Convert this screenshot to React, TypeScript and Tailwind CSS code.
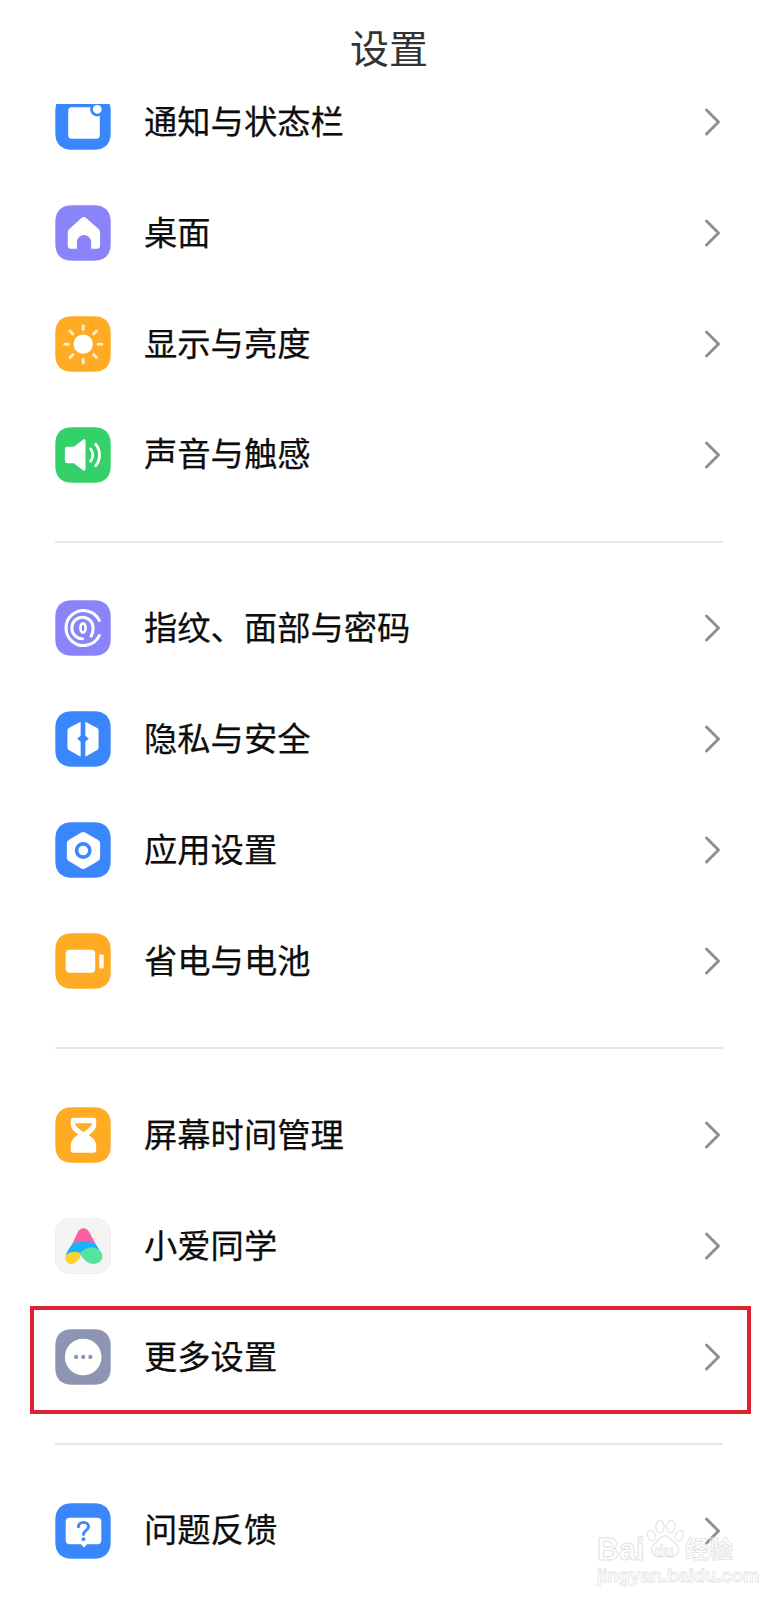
import React from "react";

const Squircle = ({ fill, stroke }: { fill: string; stroke?: string }) => (
  <path
    d="M17 .3H38C49 .3 54.700 6 54.700 17V38C54.700 49 49 54.700 38 54.700H17C6 54.700 .3 49 .3 38V17C.3 6 6 .3 17 .3Z"
    fill={fill}
    stroke={stroke}
    strokeWidth={stroke ? 0.8 : 0}
  />
);

const Svg = ({ children }: { children: React.ReactNode }) => (
  <svg width="56" height="56" viewBox="0 0 55 55" className="shrink-0 block">
    {children}
  </svg>
);

const BLUE = "#3a86fd";
const PURPLE = "#8a84fa";
const ORANGE = "#ffab24";

const icons: Record<string, React.ReactNode> = {
  bell: (
    <Svg>
      <Squircle fill={BLUE} />
      <rect x="13" y="13" width="31" height="31" rx="3.500" fill="#fff" />
      <circle cx="41.500" cy="15" r="7" fill={BLUE} />
      <circle cx="41.500" cy="15" r="4.300" fill="#fff" />
    </Svg>
  ),
  home: (
    <Svg>
      <Squircle fill={PURPLE} />
      <path
        d="M25.500 12.800a3.600 3.600 0 0 1 4.600 0l12.400 11a4 4 0 0 1 1.300 3V40a3 3 0 0 1-3 3H35V36.500a7 7 0 0 0-14 0V43h-6a3 3 0 0 1-3-3V26.800a4 4 0 0 1 1.300-3Z"
        fill="#fff"
        transform="translate(.5 0)"
      />
    </Svg>
  ),
  sun: (
    <Svg>
      <Squircle fill={ORANGE} />
      <circle cx="27.700" cy="27.700" r="9.500" fill="#fff" />
      <g stroke="#ffe9c4" strokeWidth="3" strokeLinecap="round">
        <path d="M27.700 9.500v3.800M27.700 42.200v3.800M9.500 27.700h3.800M42.200 27.700h3.800M14.800 14.800l2.700 2.700M38 38l2.700 2.700M14.800 40.700l2.700-2.700M38 17.500l2.700-2.700" />
      </g>
    </Svg>
  ),
  sound: (
    <Svg>
      <Squircle fill="#34d068" />
      <path
        d="M12 19.500h6.500L27.500 12.500c1.300-1 2.500-.4 2.500 1.200v27.600c0 1.600-1.200 2.200-2.500 1.200L18.500 35.500H12a2.300 2.300 0 0 1-2.300-2.300V21.800A2.300 2.300 0 0 1 12 19.500Z"
        fill="#fff"
      />
      <path d="M35 21.500c2.800 3.500 2.800 8.500 0 12M40 17c5 6 5 15 0 21" fill="none" stroke="#fff" strokeWidth="2.800" strokeLinecap="round" />
    </Svg>
  ),
  finger: (
    <Svg>
      <Squircle fill={PURPLE} />
      <g fill="none" stroke="#fff" strokeLinecap="round">
        <path d="M43.500 20A17.200 17.200 0 1 0 43.500 35" strokeWidth="3" />
        <path d="M27 38a10.500 10.500 0 1 1 10.500-10.500c0 3-.5 5.500-2 8" strokeWidth="3" />
        <ellipse cx="27.500" cy="27.500" rx="2.500" ry="4.500" strokeWidth="2.600" />
      </g>
    </Svg>
  ),
  shield: (
    <Svg>
      <Squircle fill={BLUE} />
      <path d="M25.200 10.500v13.500l-3 3.300 3 3v14.700L14 38.500a3 3 0 0 1-1.800-2.700V19.300A3 3 0 0 1 14 16.500Z" fill="#fff" />
      <path d="M29.800 10.500v13.500l3 3.300-3 3v14.700L41 38.500a3 3 0 0 0 1.800-2.700V19.300A3 3 0 0 0 41 16.500Z" fill="#fff" />
      <path d="M27.500 20.800l2 4.500 4 2-4 2-2 4.500-2-4.500-4-2 4-2Z" fill={BLUE} />
    </Svg>
  ),
  nut: (
    <Svg>
      <Squircle fill={BLUE} />
      <path d="M25.800 10.300a3.800 3.800 0 0 1 3.800 0l12.800 7.300a3.800 3.800 0 0 1 1.900 3.300v14a3.800 3.800 0 0 1-1.900 3.300l-12.800 7.400a3.800 3.800 0 0 1-3.800 0l-12.300-7.400a3.800 3.800 0 0 1-1.900-3.300v-14a3.800 3.800 0 0 1 1.900-3.300Z" fill="#fff" />
      <circle cx="27.700" cy="28" r="6.500" fill="#fff" stroke={BLUE} strokeWidth="3.500" />
    </Svg>
  ),
  battery: (
    <Svg>
      <Squircle fill={ORANGE} />
      <rect x="10.500" y="16.500" width="29" height="22.500" rx="4" fill="#fff" />
      <rect x="43.500" y="21" width="4.300" height="13.800" rx="1" fill="#fff" />
    </Svg>
  ),
  hourglass: (
    <Svg>
      <Squircle fill={ORANGE} />
      <path d="M18 10.500h20a2.500 2.500 0 0 1 2.500 2.500v4c0 4-2.500 7.500-7.500 10.500 5 3 7.500 6.500 7.500 10.500v5A2.500 2.500 0 0 1 38 45H18a2.500 2.500 0 0 1-2.500-2.500v-5c0-4 2.500-7.500 7.500-10.500-5-3-7.500-6.500-7.500-10.500v-4A2.500 2.500 0 0 1 18 10.500Z" fill="#fff" />
      <path d="M19.500 16h17c-.8 3-3.500 5.500-8.500 8.500-5-3-7.700-5.500-8.500-8.500Z" fill={ORANGE} />
    </Svg>
  ),
  ai: (
    <Svg>
      <Squircle fill="#f4f4f5" stroke="#e9e9ea" />
      <path d="M28 10c2.700 0 4.500 1.600 5.800 4.200L43.500 32H14l8.200-17.800C23.500 11.600 25.300 10 28 10Z" fill="#fb5f9f" />
      <path d="M10.500 37c1-4 3.500-8 6.500-11 3-2.300 7-3.500 11.500-3.500 4.500 0 8.500 1.300 11.500 3.500l3.500 5-17 6-6-3-10 3Z" fill="#19b2ff" />
      <path d="M10 40.500c-.5-3 1.500-5.500 5-6.700 4-1.300 8-.8 10.500 1.700-.5 4-3.500 8-8.500 9.500-3.500 1-6-1.500-7-4.500Z" fill="#fed22d" />
      <path d="M24.500 34.500c3-3.500 7.500-6 12.500-5.500 5.500.5 9.500 4 9.500 8.500 0 4.500-4 7.500-8.500 7.500-5.500 0-10-4-13.500-10.500Z" fill="#55e3a0" />
    </Svg>
  ),
  more: (
    <Svg>
      <Squircle fill="#8e95b2" />
      <circle cx="27.700" cy="27.500" r="18" fill="#fff" />
      <circle cx="20.700" cy="27.500" r="2.100" fill="#8e95b2" />
      <circle cx="27.700" cy="27.500" r="2.100" fill="#8e95b2" />
      <circle cx="34.700" cy="27.500" r="2.100" fill="#8e95b2" />
    </Svg>
  ),
  help: (
    <Svg>
      <Squircle fill={BLUE} />
      <path d="M14.500 14.500h27a4 4 0 0 1 4 4V36.500a4 4 0 0 1-4 4H31.500l-3 3.200-3-3.200H14.500a4 4 0 0 1-4-4V18.500a4 4 0 0 1 4-4Z" fill="#fff" />
      <path d="M23 23.500c0-2.800 2.200-4.500 5-4.500s5 1.700 5 4.300c0 3.700-5 3.700-5 7.700" fill="none" stroke={BLUE} strokeWidth="2.800" strokeLinecap="round" />
      <circle cx="28" cy="35.500" r="1.900" fill={BLUE} />
    </Svg>
  ),
};

const Row = ({ icon, label }: { icon: string; label: string }) => (
  <div className="flex items-center h-[110.875px] pl-[55px] pr-[57px]">
    {icons[icon]}
    <span className="ml-[33px] mb-[5px] flex-1 text-[33.300px] leading-none text-[#0d0d0d] [-webkit-text-stroke:.25px_#0d0d0d]">{label}</span>
    <svg width="18" height="28" viewBox="0 0 18 28" className="shrink-0 block">
      <path d="M3.500 2l12 12-12 12" fill="none" stroke="#8f8f8f" strokeWidth="2.900" strokeLinecap="round" strokeLinejoin="round" />
    </svg>
  </div>
);

const Divider = () => (
  <div className="px-[55px] h-[63px] flex items-center">
    <div className="h-[2px] w-full bg-[#e6e6e6]" />
  </div>
);

export default function App() {
  return (
    <div className="relative h-[1600px] w-[778px] overflow-hidden bg-white font-['Noto_Sans_CJK_SC','Noto_Sans',sans-serif]">
      <header className="relative z-10 h-[104px] bg-white pt-[27px] text-center text-[39px] leading-[39px] text-[#333333]">
        设置
      </header>
      <main className="-mt-[37.500px]">
        <Row icon="bell" label="通知与状态栏" />
        <Row icon="home" label="桌面" />
        <Row icon="sun" label="显示与亮度" />
        <Row icon="sound" label="声音与触感" />
        <Divider />
        <Row icon="finger" label="指纹、面部与密码" />
        <Row icon="shield" label="隐私与安全" />
        <Row icon="nut" label="应用设置" />
        <Row icon="battery" label="省电与电池" />
        <Divider />
        <Row icon="hourglass" label="屏幕时间管理" />
        <Row icon="ai" label="小爱同学" />
        <Row icon="more" label="更多设置" />
        <Divider />
        <Row icon="help" label="问题反馈" />
      </main>

      {/* red annotation */}
      <div className="absolute left-[30px] top-[1306px] h-[108px] w-[721px] border-[4px] border-[#dc2331]" />

      {/* watermark */}
      <div className="absolute left-[594px] top-[1514px] h-[72px] w-[142px] font-['Liberation_Sans',sans-serif] text-transparent">
        <span className="absolute left-[3px] top-[20px] text-[30.500px] leading-[30px] font-bold [-webkit-text-stroke:1px_#e2e2e2]">Bai</span>
        <svg width="42" height="48" viewBox="0 0 50 50" className="absolute left-[50px] top-[2px]" fill="none" stroke="#e2e2e2" strokeWidth="1.400">
          <ellipse cx="9" cy="20" rx="4.500" ry="6.500" transform="rotate(-25 9 20)" />
          <ellipse cx="19" cy="9" rx="5" ry="7.500" />
          <ellipse cx="32" cy="9" rx="5" ry="7.500" />
          <ellipse cx="42" cy="20" rx="4.500" ry="6.500" transform="rotate(25 42 20)" />
          <path d="M25 20c6 0 8 6 13 10 6 5 2 16-6 15-3 0-5-1-7-1s-4 1-7 1c-8 1-12-10-6-15 5-4 7-10 13-10Z" />
        </svg>
        <span className="absolute left-[60px] top-[30px] text-[16px] leading-[16px] font-bold [-webkit-text-stroke:.8px_#e2e2e2]">du</span>
        <span className="absolute left-[91px] top-[21px] text-[24px] leading-[26px] font-['Noto_Sans_CJK_SC',sans-serif] font-bold [-webkit-text-stroke:.8px_#e2e2e2]">经验</span>
        <span className="absolute left-[3px] top-[53px] text-[18.500px] leading-[18px] font-bold whitespace-nowrap [-webkit-text-stroke:.8px_#e4e4e4]">jingyan.baidu.com</span>
      </div>
    </div>
  );
}
